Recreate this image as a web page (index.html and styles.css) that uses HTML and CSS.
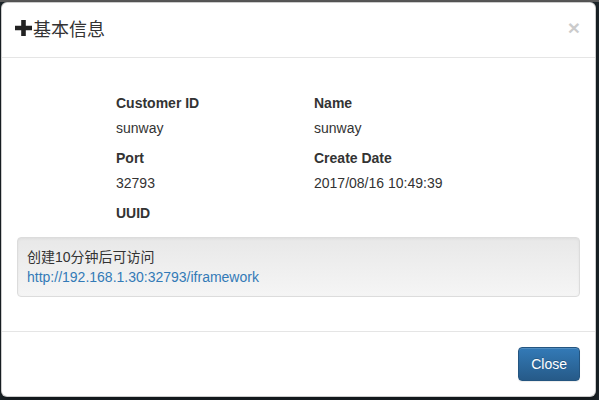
FILE: index.html
```html
<!DOCTYPE html>
<html>
<head>
<meta charset="utf-8">
<link rel="stylesheet" href="styles.css">
</head>
<body>
<div class="backdrop">
  <div class="modal">
    <div class="modal-header">
      <button class="close" type="button">×</button>
      <h4 class="modal-title"><svg class="plus" width="17" height="16" viewBox="0 0 17 16"><path d="M6.2 0h4.6v5.7H17v4.6h-6.2V16H6.2v-5.7H0V5.7h6.2z" fill="#222"/></svg>基本信息</h4>
    </div>
    <div class="modal-body">
      <div class="info">
        <div class="field">
          <div class="label">Customer ID</div>
          <div class="value">sunway</div>
        </div>
        <div class="field">
          <div class="label">Name</div>
          <div class="value">sunway</div>
        </div>
        <div class="field">
          <div class="label">Port</div>
          <div class="value">32793</div>
        </div>
        <div class="field">
          <div class="label">Create Date</div>
          <div class="value">2017/08/16 10:49:39</div>
        </div>
        <div class="field">
          <div class="label">UUID</div>
          <div class="value"></div>
        </div>
      </div>
      <div class="well">
        <div>创建10分钟后可访问</div>
        <a class="link" href="#">http://192.168.1.30:32793/iframework</a>
      </div>
    </div>
    <div class="modal-footer">
      <button class="btn" type="button">Close</button>
    </div>
  </div>
</div>
</body>
</html>
```
FILE: styles.css
```css
html, body {
  margin: 0;
  padding: 0;
}
body {
  background: #1d262b;
  font-family: "Liberation Sans", Arial, "Noto Sans CJK SC", sans-serif;
  font-size: 14px;
  line-height: 20px;
  color: #333;
  width: 599px;
  height: 400px;
  overflow: hidden;
}
.backdrop {
  padding: 2px 3px 3px 1px;
  background: linear-gradient(to bottom, #5c5c5c 0, #5c5c5c 2px, transparent 2px);
}
.modal {
  background: #fff;
  border: 1px solid rgba(0,0,0,.2);
  border-radius: 6px;
  box-shadow: 0 3px 9px rgba(0,0,0,.5);
  height: 395px;
  box-sizing: border-box;
  display: flex;
  flex-direction: column;
}
.modal-header {
  padding: 12px 15px 16px;
  border-bottom: 1px solid #e5e5e5;
  display: flex;
  align-items: center;
  flex-direction: row-reverse;
  justify-content: space-between;
}
.modal-title {
  margin: 0;
  font-size: 18px;
  font-weight: normal;
  line-height: 26px;
  font-family: "Noto Sans CJK SC", "Liberation Sans", sans-serif;
  display: flex;
  align-items: center;
  color: #333;
}
.plus {
  display: block;
  margin-left: -2px;
  margin-right: 1px;
  margin-top: -1px;
}
.close {
  background: none;
  border: 0;
  padding: 0;
  font-family: "Liberation Sans", Arial, sans-serif;
  font-size: 21px;
  font-weight: bold;
  line-height: 1;
  color: #000;
  opacity: .2;
  text-shadow: 0 1px 0 #fff;
  margin-top: -1px;
}
.modal-body {
  padding: 15px;
  flex: 1;
}
.info {
  display: grid;
  grid-template-columns: 198px 198px;
  padding: 20px 0 0 99px;
  margin-bottom: 9px;
}
.label {
  font-weight: bold;
  line-height: 20px;
  margin-bottom: 5px;
}
.value {
  line-height: 20px;
  min-height: 20px;
  margin-bottom: 10px;
}
.field:nth-child(5) .value {
  display: none;
}
.well {
  padding: 9px;
  border: 1px solid #dcdcdc;
  border-radius: 4px;
  background: linear-gradient(to bottom, #e8e8e8 0, #f5f5f5 100%);
  box-shadow: inset 0 1px 3px rgba(0,0,0,.05), 0 1px 0 rgba(255,255,255,.1);
  font-family: "Liberation Sans", "Noto Sans CJK SC", sans-serif;
}
.link {
  color: #337ab7;
  text-decoration: none;
}
.modal-footer {
  padding: 15px;
  border-top: 1px solid #e5e5e5;
  display: flex;
  justify-content: flex-end;
}
.btn {
  font-family: "Liberation Sans", Arial, sans-serif;
  font-size: 14px;
  line-height: 20px;
  padding: 6px 12px;
  height: 34px;
  color: #fff;
  border: 1px solid #245580;
  border-radius: 4px;
  background: linear-gradient(to bottom, #337ab7 0, #265a88 100%);
  text-shadow: 0 -1px 0 rgba(0,0,0,.2);
  box-shadow: inset 0 1px 0 rgba(255,255,255,.15), 0 1px 1px rgba(0,0,0,.075);
}
```
